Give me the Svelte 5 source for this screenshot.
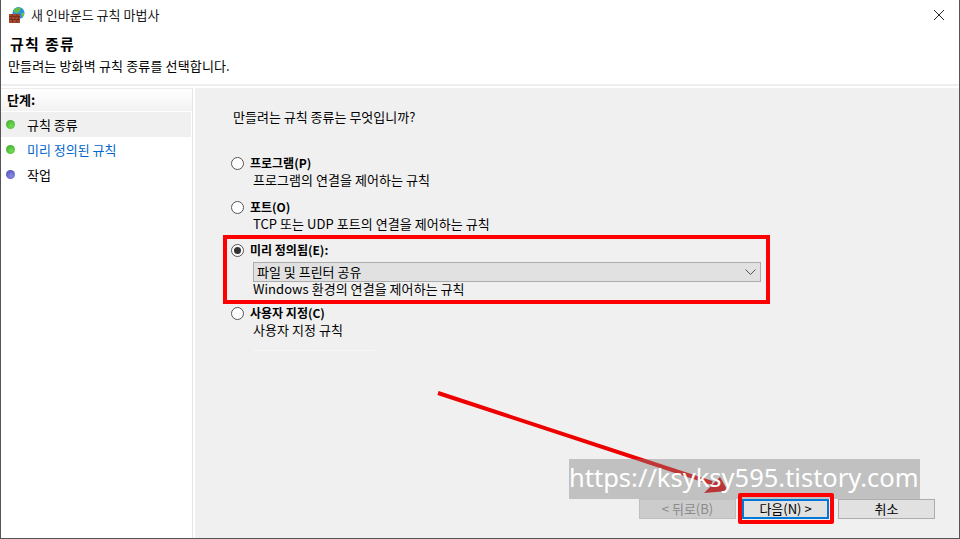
<script>
  const steps = [
    { label: '규칙 종류', dot: 'green', current: true },
    { label: '미리 정의된 규칙', dot: 'green', link: true },
    { label: '작업', dot: 'blue' }
  ];
</script>

<div class="window">
  <header class="titlebar">
    <svg class="app-icon" width="16" height="16" viewBox="0 0 16 16">
      <circle cx="9.500" cy="6" r="6" fill="#2f8fd8" />
      <path d="M6 1.500c2-1.500 5-1.500 6 0l-1.500 3-3 2-3-2z" fill="#5fbf4a" />
      <path d="M12 7l3-1.500c.5 2-.5 4-1.500 5z" fill="#6cc24f" />
      <rect x="0" y="7" width="11" height="9" fill="#a5482f" />
      <path d="M0 9.500h11M0 12.500h11M3.500 7v2.500M8 7v2.500M2 9.500v3M6 9.500v3M9.500 9.500v3M3.500 12.500V16M8 12.500V16" stroke="#6f2c1c" stroke-width="0.8" fill="none" />
    </svg>
    <span class="title-text">새 인바운드 규칙 마법사</span>
    <svg class="close" width="10" height="10" viewBox="0 0 10 10">
      <path d="M0 0l10 10M10 0L0 10" stroke="#222" stroke-width="1" fill="none" />
    </svg>
  </header>

  <div class="head">
    <h1>규칙 종류</h1>
    <p>만들려는 방화벽 규칙 종류를 선택합니다.</p>
  </div>

  <div class="body">
    <aside class="steps">
      <div class="steps-title">단계:</div>
      <ul>
        {#each steps as s}
          <li class:current={s.current} class:link={s.link}>
            <span class="dot {s.dot}"></span>
            <span>{s.label}</span>
          </li>
        {/each}
      </ul>
    </aside>

    <main class="panel">
      <p class="question">만들려는 규칙 종류는 무엇입니까?</p>

      <div class="option first">
        <span class="radio"></span>
        <div>
          <div class="opt-label">프로그램(P)</div>
          <div class="opt-desc">프로그램의 연결을 제어하는 규칙</div>
        </div>
      </div>

      <div class="option second">
        <span class="radio"></span>
        <div>
          <div class="opt-label">포트(O)</div>
          <div class="opt-desc">TCP 또는 UDP 포트의 연결을 제어하는 규칙</div>
        </div>
      </div>

      <div class="option third">
        <span class="radio checked"></span>
        <div class="grow">
          <div class="opt-label">미리 정의됨(E):</div>
          <div class="select">
            <span>파일 및 프린터 공유</span>
            <svg width="11" height="6" viewBox="0 0 11 6">
              <path d="M.5.5l5 5 5-5" stroke="#555" stroke-width="1" fill="none" />
            </svg>
          </div>
          <div class="opt-desc">Windows 환경의 연결을 제어하는 규칙</div>
        </div>
      </div>

      <div class="option fourth">
        <span class="radio"></span>
        <div>
          <div class="opt-label">사용자 지정(C)</div>
          <div class="opt-desc">사용자 지정 규칙</div>
          <div class="faint-line"></div>
        </div>
      </div>

      <div class="buttons">
        <button class="disabled" disabled>&lt; 뒤로(B)</button>
        <button class="primary">다음(N) &gt;</button>
        <button class="cancel">취소</button>
      </div>
    </main>
  </div>

  <!-- annotations drawn over the screenshot -->
  <div class="mark mark-option"></div>
  <svg class="arrow" width="960" height="539" viewBox="0 0 960 539">
    <path d="M438 393L712 483" stroke="#ee0000" stroke-width="4" fill="none" />
    <path d="M704 493L728 491L720 477z" fill="#e00000" />
  </svg>
  <div class="watermark">https://ksyksy595.tistory.com</div>
  <div class="mark mark-next"></div>
</div>

<style>
  :global(body) {
    margin: 0;
    background: #fff;
  }
  .window {
    position: relative;
    width: 960px;
    height: 539px;
    box-sizing: border-box;
    border-left: 1px solid #555;
    border-right: 1px solid #555;
    border-bottom: 1px solid #555;
    background: #fff;
    overflow: hidden;
    font-family: "Noto Sans CJK KR", "Liberation Sans", sans-serif;
    font-size: 13px;
    color: #000;
    display: flex;
    flex-direction: column;
  }
  .titlebar {
    height: 30px;
    flex: none;
    display: flex;
    align-items: center;
    padding: 0 15px 0 8px;
    gap: 6px;
  }
  .title-text {
    color: #1a1a1a;
    margin-top: -2px;
  }
  .close {
    margin-left: auto;
  }
  .head {
    height: 56px;
    flex: none;
    box-sizing: border-box;
    padding-left: 7px;
    border-bottom: 2px solid #eeeeee;
  }
  .head h1 {
    margin: 0;
    padding: 4px 0 0 2px;
    font-size: 15px;
    line-height: 20px;
    font-weight: 700;
    letter-spacing: 1.300px;
  }
  .head p {
    margin: 3px 0 0;
    line-height: 18px;
    letter-spacing: 0.15px;
  }
  .body {
    flex: 1;
    display: flex;
    min-height: 0;
    padding-top: 2px;
  }
  .steps {
    width: 192px;
    flex: none;
    border-right: 1px solid #e4e4e4;
    border-top: 1px solid #ececec;
    box-sizing: border-box;
  }
  .steps-title {
    height: 22px;
    line-height: 21px;
    padding-left: 6px;
    font-weight: 700;
    background: linear-gradient(#fff, #f2f2f2);
  }
  .steps ul {
    list-style: none;
    margin: 0;
    padding: 1px 0 0;
  }
  .steps li {
    height: 25px;
    display: flex;
    align-items: center;
    padding-left: 5px;
    gap: 12px;
  }
  .steps li.current {
    background: #f0f0f0;
    margin-right: 1px;
  }
  .steps li.link {
    color: #0066cc;
  }
  .dot {
    width: 9px;
    height: 9px;
    border-radius: 50%;
    flex: none;
  }
  .dot.green {
    background: radial-gradient(circle at 60% 65%, #6fe04e, #3f9d35);
  }
  .dot.blue {
    background: radial-gradient(circle at 60% 65%, #8a8ae8, #4646b0);
  }
  .panel {
    flex: 1;
    margin-left: 2px;
    background: #f0f0f0;
    padding: 20px 0 0 38px;
    position: relative;
    min-width: 0;
  }
  .question {
    margin: 0;
    line-height: 18px;
  }
  .option {
    display: flex;
    gap: 6px;
    margin-left: -2px;
  }
  .option.first { margin-top: 29px; }
  .option.second { margin-top: 10px; }
  .option.third { margin-top: 9px; width: 530px; }
  .option.fourth { margin-top: 7px; }
  .grow { flex: 1; }
  .opt-label {
    font-weight: 700;
    font-size: 12px;
    line-height: 16px;
  }
  .opt-desc {
    margin: 0 0 1px 3px;
    line-height: 17px;
    letter-spacing: 0.05px;
  }
  .faint-line {
    margin: 12px 0 0 3px;
    width: 122px;
    height: 1px;
    background: #f6f6f6;
  }
  .radio {
    width: 13px;
    height: 13px;
    border: 1px solid #555;
    border-radius: 50%;
    background: #fff;
    flex: none;
    margin-top: 2px;
    box-sizing: border-box;
    position: relative;
  }
  .radio.checked::after {
    content: "";
    position: absolute;
    left: 2px;
    top: 2px;
    width: 7px;
    height: 7px;
    border-radius: 50%;
    background: #333;
  }
  .select {
    height: 20px;
    margin: 4px 0 -2px 3px;
    box-sizing: border-box;
    border: 1px solid #adadad;
    background: #e1e1e1;
    display: flex;
    align-items: center;
    justify-content: space-between;
    padding: 0 4px 2px 3px;
    line-height: 17px;
  }
  .select svg {
    margin-top: 2px;
  }
  .buttons {
    position: absolute;
    right: 24px;
    bottom: 19px;
    display: flex;
    gap: 9px;
  }
  button {
    width: 97px;
    height: 20px;
    padding: 0;
    box-sizing: border-box;
    border: 1px solid #adadad;
    background: #e1e1e1;
    font: inherit;
    color: #000;
    line-height: 16px;
  }
  button.disabled {
    color: #8a8a8a;
    background: #cccccc;
    border-color: #bfbfbf;
  }
  button.primary {
    width: 87px;
    border: 2px solid #0078d7;
    margin-left: -3px;
  }
  .mark {
    position: absolute;
    box-sizing: border-box;
    border: 4px solid #ff0000;
    pointer-events: none;
  }
  .mark-option {
    left: 222px;
    top: 235px;
    width: 547px;
    height: 69px;
  }
  .mark-next {
    left: 737px;
    top: 493px;
    width: 96px;
    height: 31px;
    border-radius: 2px;
  }
  .watermark {
    position: absolute;
    left: 568px;
    top: 459px;
    width: 351px;
    height: 40px;
    background: rgba(128, 128, 128, 0.42);
    color: #fff;
    font-family: "Noto Sans", sans-serif;
    font-size: 25.500px;
    line-height: 36px;
    white-space: nowrap;
    overflow: hidden;
  }
  .arrow {
    position: absolute;
    left: -1px;
    top: 0;
    pointer-events: none;
  }
</style>
